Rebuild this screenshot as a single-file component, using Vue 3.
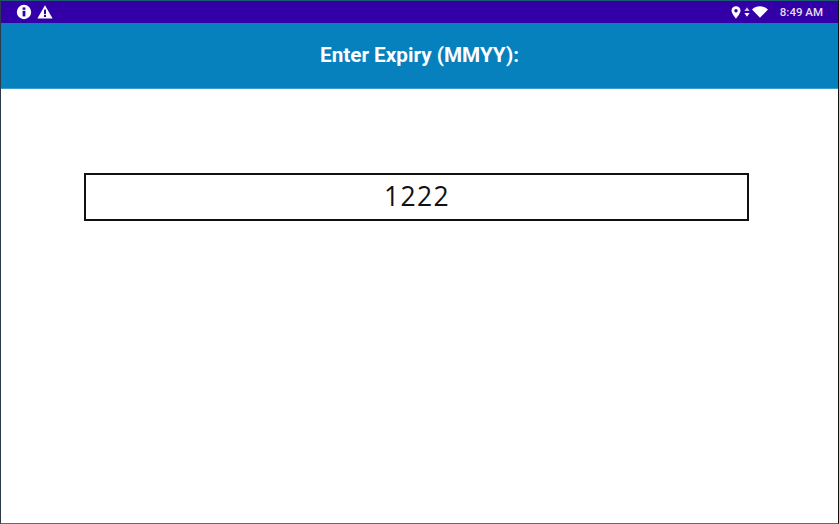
<script setup>
const title = 'Enter Expiry (MMYY):'
const value = '1222'
</script>

<template>
  <div class="frame">
    <div class="status">
      <div class="status-left">
        <svg class="ic" width="16" height="16" viewBox="0 0 16 16">
          <circle cx="8" cy="8" r="7.2" fill="#fff" />
          <rect x="6.6" y="6.8" width="2.8" height="5.6" fill="#3300a8" />
          <rect x="6.6" y="3.4" width="2.8" height="2.4" fill="#3300a8" />
        </svg>
        <svg class="ic" width="16" height="14" viewBox="0 0 16 14">
          <path d="M8 0.3 L15.6 13.6 H0.4 Z" fill="#fff" />
          <rect x="7" y="4.6" width="2" height="4.6" fill="#3300a8" />
          <rect x="7" y="10" width="2" height="2" fill="#3300a8" />
        </svg>
      </div>
      <div class="status-right">
        <svg width="10" height="13" viewBox="0 0 10 13">
          <path fill-rule="evenodd" d="M5 0.3 C2.3 0.3 0.5 2.2 0.5 4.6 C0.5 7.6 5 12.7 5 12.7 C5 12.7 9.5 7.6 9.5 4.6 C9.5 2.2 7.7 0.3 5 0.3 Z M5 3 A1.7 1.7 0 1 1 5 6.4 A1.7 1.7 0 1 1 5 3 Z" fill="#fff" />
        </svg>
        <svg class="arrows" width="6" height="10" viewBox="0 0 6 10">
          <path d="M3 0.3 L5.6 4 H0.4 Z" fill="#c9c0ea" />
          <path d="M3 9.7 L5.6 6 H0.4 Z" fill="#fff" />
        </svg>
        <svg class="wifi" width="16" height="12" viewBox="0 0 16 12">
          <path d="M0 3.4 C4.4 -0.8 11.6 -0.8 16 3.4 L8 11.8 Z" fill="#fff" />
        </svg>
        <span class="clock">8:49 AM</span>
      </div>
    </div>
    <header class="bar">{{ title }}</header>
    <main class="body">
      <div class="field">{{ value }}</div>
    </main>
  </div>
</template>

<style>
html, body { margin: 0; background: #fff; }
</style>

<style scoped>
.frame {
  box-sizing: border-box;
  width: 839px;
  height: 524px;
  display: flex;
  flex-direction: column;
  border-top: 1px solid #1d5c6a;
  border-left: 1px solid #2a3a4a;
  border-right: 1px solid #111;
  border-bottom: 1px solid #3d7a7c;
  background: #fff;
  overflow: hidden;
}
.status {
  height: 22px;
  flex: none;
  background: #3300a8;
  display: flex;
  align-items: center;
  justify-content: space-between;
  padding: 0 15px 0 15px;
}
.status-left { display: flex; align-items: center; gap: 5px; }
.status-right { display: flex; align-items: center; }
.arrows { margin-left: 3px; }
.wifi { margin-left: 2px; }
.clock {
  margin-left: 12px;
  color: #e4def5;
  font: 500 11.5px Roboto, sans-serif;
}
.bar {
  height: 66px;
  flex: none;
  box-sizing: border-box;
  background: #0681bd;
  border-bottom: 1px solid #3d9bd0;
  padding-bottom: 2px;
  color: #fff;
  display: flex;
  align-items: center;
  justify-content: center;
  font: 700 20.7px Roboto, sans-serif;
}
.body {
  flex: 1;
  padding: 84px 89px 0 83px;
}
.field {
  box-sizing: border-box;
  height: 48px;
  border: 2px solid #111;
  padding-bottom: 3px;
  display: flex;
  align-items: center;
  justify-content: center;
  color: #111;
  font: 400 26.5px "Open Sans", sans-serif;
  letter-spacing: 1.4px;
  text-indent: 1px;
}
</style>
